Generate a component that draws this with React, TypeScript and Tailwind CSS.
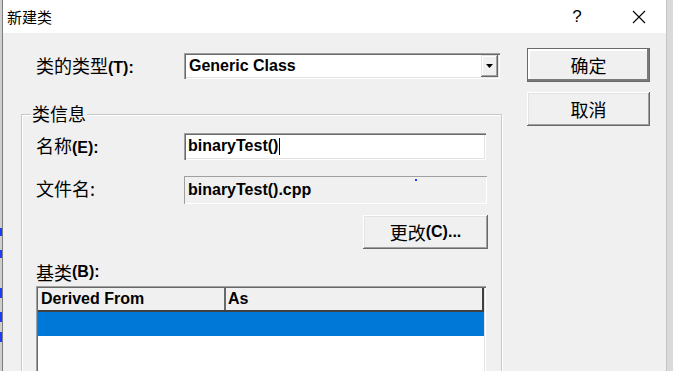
import React from "react";

const cjk = { fontFamily: '"Noto Sans CJK SC", "Noto Sans", sans-serif' };
const ui = { fontFamily: '"Liberation Sans", Arial, sans-serif' };

function Btn({ children, def = false, className = "" }: { children: React.ReactNode; def?: boolean; className?: string }) {
  return (
    <div
      className={
        "flex items-center justify-center bg-[#f0f0f0] text-[18px] text-black " +
        (def
          ? "border border-[#6a6a6a] shadow-[inset_-2px_-2px_0_#7a7a7a,inset_2px_2px_0_#ffffff] "
          : "shadow-[inset_-1px_-1px_0_#696969,inset_1px_1px_0_#ffffff,inset_-2px_-2px_0_#a0a0a0,inset_2px_2px_0_#e3e3e3] ") +
        className
      }
      style={cjk}
    >
      {children}
    </div>
  );
}

function Accel({ children }: { children: React.ReactNode }) {
  return (
    <span className="text-[16px] font-bold" style={ui}>
      {children}
    </span>
  );
}

export default function App() {
  return (
    <div className="w-[673px] h-[371px] overflow-hidden flex bg-[#d6d6d6]">
      {/* left background strip */}
      <div className="w-[3px] h-full bg-[#cfcfcf] border-r border-[#7d7d7d] flex flex-col">
        <div className="h-[228px]" />
        <div className="h-[8px] bg-[#1a3cff] w-[2px]" />
        <div className="h-[14px]" />
        <div className="h-[8px] bg-[#1a3cff] w-[2px]" />
        <div className="h-[30px]" />
        <div className="h-[10px] bg-[#1a3cff] w-[2px]" />
        <div className="h-[14px]" />
        <div className="h-[10px] bg-[#1a3cff] w-[2px]" />
        <div className="h-[10px]" />
        <div className="h-[10px] bg-[#1a3cff] w-[2px]" />
      </div>

      {/* window */}
      <div className="w-[663px] h-full flex flex-col bg-[#f0f0f0]">
        {/* title bar */}
        <div className="h-[33px] bg-white flex items-center shrink-0">
          <div className="pl-[4px] text-[15px] text-black leading-none" style={cjk}>
            新建类
          </div>
          <div className="flex-1" />
          <div className="w-[20px] text-center text-[17px] text-black leading-none mr-[40px]" style={ui}>
            ?
          </div>
          <div className="w-[24px] h-[24px] flex items-center justify-center mr-[15px]">
            <svg width="14" height="14" viewBox="0 0 14 14">
              <path d="M1 1 L13 13 M13 1 L1 13" stroke="#000" strokeWidth="1.1" fill="none" />
            </svg>
          </div>
        </div>

        {/* body */}
        <div className="flex flex-1">
          {/* main column */}
          <div className="w-[499px] flex flex-col pt-[20px]">
            {/* type row */}
            <div className="flex items-center h-[26px] pl-[33px]">
              <div className="w-[148px] text-[18px] text-black" style={cjk}>
                类的类型<Accel>(T):</Accel>
              </div>
              <div className="w-[316px] h-[26px] bg-white flex items-center shadow-[inset_1px_1px_0_#a0a0a0,inset_2px_2px_0_#696969,inset_-1px_-1px_0_#ffffff,inset_-2px_-2px_0_#e3e3e3]">
                <div className="flex-1 pl-[5px] text-[16px] font-bold text-black" style={ui}>
                  Generic Class
                </div>
                <div className="w-[17px] h-[22px] mr-[2px] bg-[#f0f0f0] flex items-center justify-center shadow-[inset_-1px_-1px_0_#696969,inset_1px_1px_0_#e3e3e3,inset_-2px_-2px_0_#a0a0a0,inset_2px_2px_0_#ffffff]">
                  <svg width="7" height="4" viewBox="0 0 7 4">
                    <path d="M0 0 H7 L3.5 4 Z" fill="#000" />
                  </svg>
                </div>
              </div>
            </div>

            {/* group box */}
            <div className="relative mt-[35px] ml-[18px] w-[481px] h-[300px] border border-[#c8c8c8] shadow-[1px_1px_0_#ffffff,inset_1px_1px_0_#ffffff]">
              <div className="absolute -top-[14px] left-[9px] px-[1px] bg-[#f0f0f0] text-[18px] leading-[24px] text-black" style={cjk}>
                类信息
              </div>

              <div className="flex flex-col pl-[14px] pt-[17px]">
                {/* name row */}
                <div className="flex items-center">
                  <div className="w-[148px] text-[18px] text-black" style={cjk}>
                    名称<Accel>(E):</Accel>
                  </div>
                  <div className="w-[302px] h-[27px] bg-white flex items-center pl-[4px] shadow-[inset_1px_1px_0_#a0a0a0,inset_2px_2px_0_#696969,inset_-1px_-1px_0_#ffffff,inset_-2px_-2px_0_#e3e3e3]">
                    <span className="text-[16px] font-bold text-black" style={ui}>
                      binaryTest()
                    </span>
                    <span className="w-[1px] h-[17px] bg-black ml-[1px]" />
                  </div>
                </div>

                {/* file row */}
                <div className="flex items-center mt-[16px]">
                  <div className="w-[148px] text-[18px] text-black -mt-[4px]" style={cjk}>
                    文件名:
                  </div>
                  <div className="relative w-[303px] h-[28px] bg-[#f0f0f0] flex items-center pl-[4px] shadow-[inset_1px_1px_0_#a0a0a0,inset_-1px_-1px_0_#ffffff]">
                    <span className="text-[16px] font-bold text-black" style={ui}>
                      binaryTest().cpp
                    </span>
                    <span className="absolute left-[231px] top-[3px] w-[2px] h-[2px] bg-[#1a3cff]" />
                  </div>
                </div>

                {/* change button */}
                <div className="flex mt-[11px]">
                  <Btn className="ml-[327px] w-[125px] h-[34px]">
                    更改<Accel>(C)...</Accel>
                  </Btn>
                </div>

                {/* base class label */}
                <div className="mt-[12px] h-[22px] flex items-center text-[18px] text-black" style={cjk}>
                  基类<Accel>(B):</Accel>
                </div>

                {/* list view */}
                <div className="mt-[3px] w-[450px] h-[100px] bg-white flex flex-col shadow-[inset_1px_1px_0_#a0a0a0,inset_2px_2px_0_#696969,inset_-1px_-1px_0_#ffffff,inset_-2px_-2px_0_#e3e3e3] p-[2px]">
                  <div className="flex h-[24px] bg-[#f0f0f0] border-b-2 border-[#404040]">
                    <div className="w-[188px] flex items-center pl-[3px] border-r-2 border-[#696969] text-[16px] font-bold text-black" style={ui}>
                      Derived From
                    </div>
                    <div className="flex-1 flex items-center pl-[2px] border-r-2 border-[#404040] text-[16px] font-bold text-black" style={ui}>
                      As
                    </div>
                  </div>
                  <div className="h-[24px] bg-[#0078d7]" />
                  <div className="flex-1 bg-white" />
                </div>
              </div>
            </div>
          </div>

          {/* buttons column */}
          <div className="flex flex-col pt-[15px] ml-[25px] gap-[10px]">
            <Btn def className="w-[123px] h-[34px]">
              确定
            </Btn>
            <Btn className="w-[123px] h-[34px]">取消</Btn>
          </div>
        </div>
      </div>

      {/* right background strip */}
      <div className="w-[7px] h-full bg-[#dadada] border-l border-[#c4c4c4]" />
    </div>
  );
}
